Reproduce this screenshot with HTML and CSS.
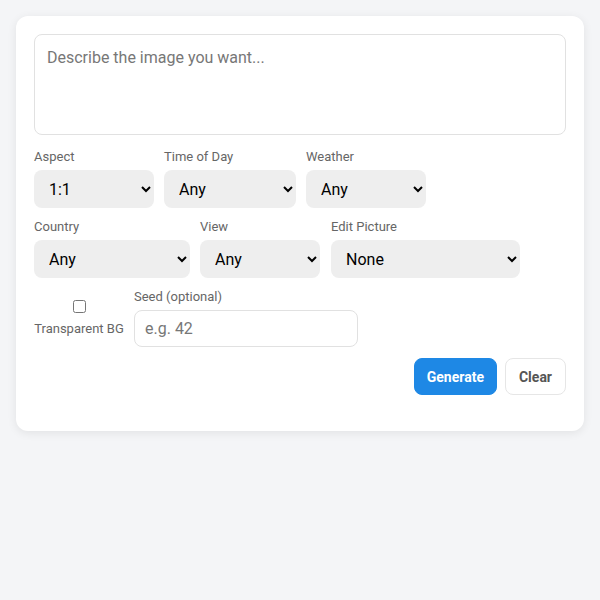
FILE: index.html
```html
<!DOCTYPE html>
<html>

<head>
  <meta name="viewport" content="width=device-width, initial-scale=1">
  <meta charset="UTF-8">
  <title>Image Generator</title>
  <link rel="stylesheet" href="styles.css">
</head>

<body>

  <div class="card">
    <textarea class="prompt" placeholder="Describe the image you want..."></textarea>

    <div class="row">
      <label class="field">
        <span class="lbl">Aspect</span>
        <select class="sel w120">
          <option>1:1</option>
          <option>16:9</option>
          <option>9:16</option>
        </select>
      </label>
      <label class="field">
        <span class="lbl">Time of Day</span>
        <select class="sel w132">
          <option>Any</option>
        </select>
      </label>
      <label class="field">
        <span class="lbl">Weather</span>
        <select class="sel w120">
          <option>Any</option>
        </select>
      </label>
    </div>

    <div class="row">
      <label class="field">
        <span class="lbl">Country</span>
        <select class="sel w156">
          <option>Any</option>
        </select>
      </label>
      <label class="field">
        <span class="lbl">View</span>
        <select class="sel w120">
          <option>Any</option>
        </select>
      </label>
      <label class="field edit">
        <span class="lbl">Edit Picture</span>
        <select class="sel w189">
          <option>None</option>
        </select>
      </label>
    </div>

    <div class="row mid">
      <label class="check">
        <input type="checkbox">
        <span class="lbl">Transparent BG</span>
      </label>
      <label class="field">
        <span class="lbl">Seed (optional)</span>
        <input type="text" class="seed" placeholder="e.g. 42">
      </label>
    </div>

    <div class="actions">
      <button class="btn primary">Generate</button>
      <button class="btn clear">Clear</button>
    </div>
  </div>

</body>

</html>
```

FILE: styles.css
```css
body {
  margin: 0;
  padding: 16px;
  background-color: #f4f5f7;
  font-family: Roboto, "Liberation Sans", sans-serif;
}

.card {
  background: white;
  border-radius: 12px;
  box-shadow: 0 2px 10px rgba(0, 0, 0, 0.08);
  padding: 18px 18px 36px;
  display: flex;
  flex-direction: column;
  gap: 11px;
}

.prompt {
  box-sizing: border-box;
  width: 100%;
  height: 101px;
  border: 1px solid #e1e1e1;
  border-radius: 8px;
  padding: 13px 12px;
  font-family: inherit;
  font-size: 16px;
  resize: none;
  margin-bottom: 3px;
}

.prompt::placeholder,
.seed::placeholder {
  color: #777;
}

.row {
  display: flex;
  gap: 10px;
}

.mid {
  align-items: center;
}

.field {
  display: flex;
  flex-direction: column;
  gap: 5px;
}

.edit {
  margin-left: 1px;
}

.lbl {
  font-size: 13px;
  color: #666;
  line-height: 16px;
}

.sel {
  box-sizing: border-box;
  height: 38px;
  border: none;
  border-radius: 8px;
  background-color: #eeeeee;
  padding: 0 8px 0 11px;
  font-family: inherit;
  font-size: 16px;
  color: black;
}

.w120 { width: 120px; }
.w132 { width: 132px; }
.w156 { width: 156px; }
.w189 { width: 189px; }

.check {
  width: 90px;
  display: flex;
  flex-direction: column;
  align-items: center;
  gap: 8px;
}

.check input {
  margin: 0;
  width: 13px;
  height: 13px;
}

.seed {
  box-sizing: border-box;
  width: 224px;
  height: 37px;
  border: 1px solid #e1e1e1;
  border-radius: 8px;
  padding: 0 10px;
  font-family: inherit;
  font-size: 16px;
}

.actions {
  display: flex;
  justify-content: flex-end;
  gap: 8px;
}

.btn {
  height: 37px;
  padding: 0 12px;
  border: 1px solid #e6e6e6;
  border-radius: 8px;
  background: white;
  color: #555;
  font-family: inherit;
  font-size: 14px;
  font-weight: bold;
}

.clear {
  padding: 0 13px;
}

.primary {
  background-color: #1e88e5;
  border-color: #1e88e5;
  color: white;
}
```
